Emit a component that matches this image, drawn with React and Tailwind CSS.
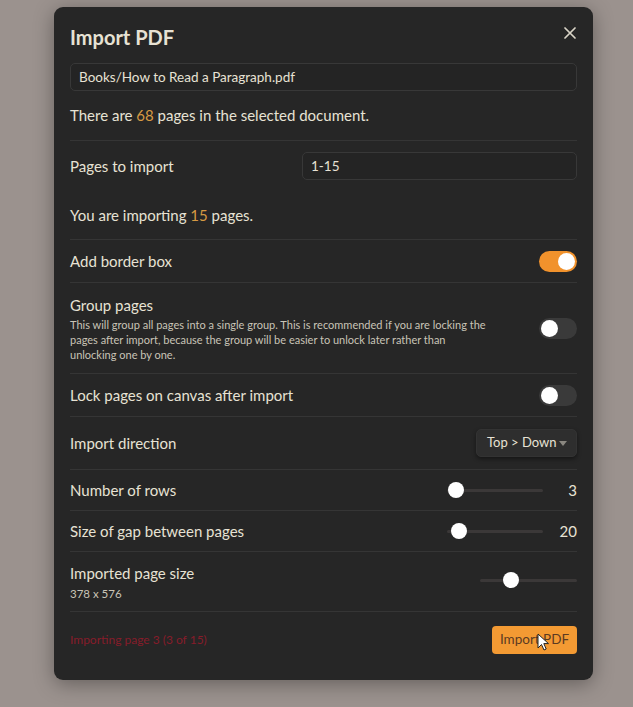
import React, { useState } from "react";

const font = { fontFamily: 'Lato, "Noto Sans", sans-serif' };

function Toggle({ on, onClick }) {
  return (
    <button
      onClick={onClick}
      className={`relative w-[38px] h-[21px] rounded-full shrink-0 ${on ? "bg-[#f1922c]" : "bg-[#3a3a3a]"}`}
    >
      <span
        className={`absolute top-[2px] w-[17px] h-[17px] rounded-full bg-white ${on ? "left-[19px]" : "left-[2px]"}`}
      />
    </button>
  );
}

function Slider({ pct, width }) {
  return (
    <div className="relative h-4 flex items-center" style={{ width }}>
      <div className="w-full h-[3px] rounded-full bg-[#3b3838]" />
      <span
        className="absolute w-4 h-4 rounded-full bg-white -translate-x-1/2"
        style={{ left: pct }}
      />
    </div>
  );
}

function Row({ h, children }) {
  return (
    <div className="flex items-center justify-between border-b border-[#353535]" style={{ height: h }}>
      {children}
    </div>
  );
}

export default function App() {
  const [border, setBorder] = useState(true);
  const [group, setGroup] = useState(false);
  const [lock, setLock] = useState(false);

  return (
    <div className="w-[633px] h-[707px] bg-[#9b928e] pt-[7px] pl-[54px]" style={font}>
      <div className="relative w-[539px] h-[673px] bg-[#262626] rounded-[9px] px-4 pt-4 shadow-[0_4px_20px_rgba(0,0,0,0.35)] text-[#e7e2d4]">
        {/* close */}
        <button className="absolute right-[17px] top-[20px] text-[#d9d4c7]">
          <svg width="12" height="12" viewBox="0 0 12 12">
            <path d="M1 1L11 11M11 1L1 11" stroke="currentColor" strokeWidth="1.7" strokeLinecap="round" />
          </svg>
        </button>

        <h1 className="text-[20px] font-bold leading-[28px]">Import PDF</h1>

        <div className="mt-3 h-[28px] rounded-[5px] border border-[#383838] bg-[#242424] flex items-center px-2 text-[13.5px]">
          Books/How to Read a Paragraph.pdf
        </div>

        <Row h={50}>
          <p className="text-[15px]">
            There are <span className="text-[#d79a43]">68</span> pages in the selected document.
          </p>
        </Row>

        <div className="h-[50px] flex items-center justify-between">
          <span className="text-[15px]">Pages to import</span>
          <div className="w-[275px] h-[28px] rounded-[5px] border border-[#383838] bg-[#242424] flex items-center px-2 text-[13.5px]">
            1-15
          </div>
        </div>

        <Row h={49}>
          <p className="text-[15px]">
            You are importing <span className="text-[#d79a43]">15</span> pages.
          </p>
        </Row>

        <Row h={43}>
          <span className="text-[15px]">Add border box</span>
          <Toggle on={border} onClick={() => setBorder(!border)} />
        </Row>

        <Row h={91}>
          <div className="w-[420px]">
            <div className="text-[15px] leading-[20px]">Group pages</div>
            <p className="mt-[2px] text-[11px] leading-[15px] text-[#c9c4b7]">
              This will group all pages into a single group. This is recommended if you are locking the pages after import, because the group will be easier to unlock later rather than unlocking one by one.
            </p>
          </div>
          <Toggle on={group} onClick={() => setGroup(!group)} />
        </Row>

        <Row h={43}>
          <span className="text-[15px]">Lock pages on canvas after import</span>
          <Toggle on={lock} onClick={() => setLock(!lock)} />
        </Row>

        <Row h={53}>
          <span className="text-[15px]">Import direction</span>
          <div className="w-[101px] h-[28px] rounded-[5px] bg-[#2e2e2e] shadow-[0_2px_4px_rgba(0,0,0,0.45)] border border-[#333] flex items-center justify-between pl-[10px] pr-[9px] text-[13px] whitespace-nowrap">
            <span>Top &gt; Down</span>
            <svg width="8" height="5" viewBox="0 0 8 5">
              <path d="M0 0H8L4 5Z" fill="#8a8780" />
            </svg>
          </div>
        </Row>

        <Row h={41}>
          <span className="text-[15px]">Number of rows</span>
          <div className="flex items-center">
            <Slider pct="9px" width={96} />
            <span className="w-[34px] text-right text-[15px]">3</span>
          </div>
        </Row>

        <Row h={41}>
          <span className="text-[15px]">Size of gap between pages</span>
          <div className="flex items-center">
            <Slider pct="12px" width={96} />
            <span className="w-[34px] text-right text-[15px]">20</span>
          </div>
        </Row>

        <Row h={60}>
          <div>
            <div className="text-[15px] leading-[20px]">Imported page size</div>
            <div className="mt-[3px] text-[11.5px] leading-[15px] text-[#c9c4b7]">378 x 576</div>
          </div>
          <div className="mb-[3px]">
            <Slider pct="31px" width={97} />
          </div>
        </Row>

        <div className="h-[55px] flex items-center justify-between">
          <span className="text-[12px] text-[#861c2a]">Importing page 3 (3 of 15)</span>
          <button className="relative w-[85px] h-[28px] rounded-[4px] bg-[#f39a33] text-[13.5px] text-[#5b3a22]">
            Import PDF
            <svg className="absolute left-[45px] top-[7px]" width="12" height="18" viewBox="0 0 12 18">
              <path d="M1 1V15L4.5 11.5L7 17L9.2 16L6.8 10.6H11.5Z" fill="#fff" stroke="#222" strokeWidth="1" strokeLinejoin="round" />
            </svg>
          </button>
        </div>
      </div>
    </div>
  );
}
